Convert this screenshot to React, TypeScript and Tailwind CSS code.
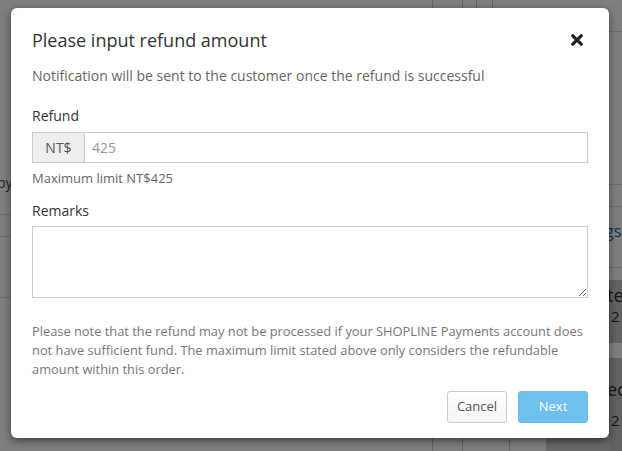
import React from "react";

function CloseIcon() {
  return (
    <svg width="12" height="12" viewBox="0 0 12 12" aria-hidden="true">
      <path d="M1.8 1.8 L10.2 10.2 M10.2 1.8 L1.8 10.2" stroke="#1f1f1f" strokeWidth="3.2" strokeLinecap="round" />
    </svg>
  );
}

export default function App() {
  return (
    <div
      className="relative h-[451px] w-[622px] overflow-hidden bg-white text-[#333]"
      style={{ fontFamily: '"Open Sans", "Noto Sans", Arial, sans-serif' }}
    >
      {/* underlying page */}
      <div className="grid h-full grid-cols-[11px_598px_13px]">
        <div className="flex flex-col">
          <div className="h-[173px]" />
          <div className="h-[20px] whitespace-nowrap text-[14px] leading-[20px] text-[#444] -ml-[3px]">py</div>
          <div className="h-[22px] border-b border-[#ddd]" />
          <div className="h-[22px] border-b border-[#ddd]" />
          <div className="h-[61px] border-b border-[#ddd]" />
        </div>
        <div className="flex flex-col justify-between">
          <div className="flex h-[8px]">
            <div className="w-[421px]" />
            <div className="w-[30px] border-l border-[#ccc]" />
            <div className="w-[14px] border-l border-[#ccc]" />
            <div className="w-[16px] border-l border-[#ccc]" />
            <div className="flex-1 border-l border-[#ccc]" />
          </div>
          <div className="flex h-[13px]">
            <div className="w-[421px]" />
            <div className="w-[30px] border-l border-[#ccc]" />
            <div className="w-[47px] border-l border-[#ccc]" />
            <div className="w-[37px] border-l border-[#ccc]" />
            <div className="flex-1 bg-[#d0d0d0]" />
          </div>
        </div>
        <div className="flex flex-col whitespace-nowrap text-[16px] text-[#333]">
          <div className="h-[32px] border-b border-[#ddd]" />
          <div className="h-[153px] border-b border-[#ddd]" />
          <div className="h-[22px] border-b border-[#ddd]" />
          <div className="h-[61px] border-b border-[#ddd] pt-[12px] -ml-[4px] text-[#1a6aa8]">gs</div>
          <div className="h-[12px]" />
          <div className="flex h-[63px] flex-col bg-[#c4c4c4] pt-[4px]">
            <span className="-ml-[2px] leading-[22px] text-[18px]">te</span>
            <span className="ml-[2px] leading-[20px] text-[15px]">2</span>
          </div>
          <div className="h-[15px]" />
          <div className="flex flex-1 flex-col bg-[#c4c4c4] pt-[20px]">
            <span className="-ml-[2px] leading-[22px] text-[18px]">ec</span>
            <span className="ml-[2px] mt-[10px] leading-[20px] text-[15px]">2</span>
          </div>
        </div>
      </div>

      {/* backdrop */}
      <div className="absolute inset-0 bg-black/50" />

      {/* modal */}
      <div className="absolute left-[11px] top-[8px] flex w-[598px] flex-col rounded-[6px] bg-white px-[21px] pb-[15px] pt-[22px] shadow-[0_3px_9px_rgba(0,0,0,0.5)]">
        <div className="flex items-center justify-between">
          <h2 className="text-[18px] leading-[20px] text-[#333]">Please input refund amount</h2>
          <button className="mr-[4px] flex h-[20px] w-[14px] items-center justify-center">
            <CloseIcon />
          </button>
        </div>

        <p className="mt-[16px] text-[14px] leading-[20px] text-[#666]">
          Notification will be sent to the customer once the refund is successful
        </p>

        <label className="mt-[20px] text-[14px] leading-[20px] text-[#333]">Refund</label>
        <div className="mt-[6px] flex h-[31px] border border-[#ccc]">
          <div className="flex w-[52px] items-center justify-center border-r border-[#ccc] bg-[#eee] text-[14px] text-[#555]">
            NT$
          </div>
          <input
            className="flex-1 px-[7px] text-[14px] text-[#555] outline-none placeholder:text-[#999]"
            placeholder="425"
          />
        </div>
        <p className="mt-[6px] text-[13px] leading-[18px] text-[#666]">Maximum limit NT$425</p>

        <label className="mt-[14px] text-[14px] leading-[20px] text-[#333]">Remarks</label>
        <textarea className="mt-[5px] h-[72px] w-full border border-[#ccc] px-[7px] py-[5px] text-[14px] outline-none" />

        <p className="mt-[24px] whitespace-nowrap text-[12.85px] leading-[19px] text-[#777]">
          Please note that the refund may not be processed if your SHOPLINE Payments account does
          <br />
          not have sufficient fund. The maximum limit stated above only considers the refundable
          <br />
          amount within this order.
        </p>

        <div className="mt-[12px] flex justify-end gap-[11px]">
          <button className="h-[32px] w-[60px] rounded-[3px] border border-[#ccc] bg-gradient-to-b from-white to-[#f4f4f4] text-[13px] text-[#555]">
            Cancel
          </button>
          <button className="h-[32px] w-[70px] rounded-[3px] border border-[#68bbea] bg-[#6ec0ef] text-[13px] text-white">
            Next
          </button>
        </div>
      </div>
    </div>
  );
}
